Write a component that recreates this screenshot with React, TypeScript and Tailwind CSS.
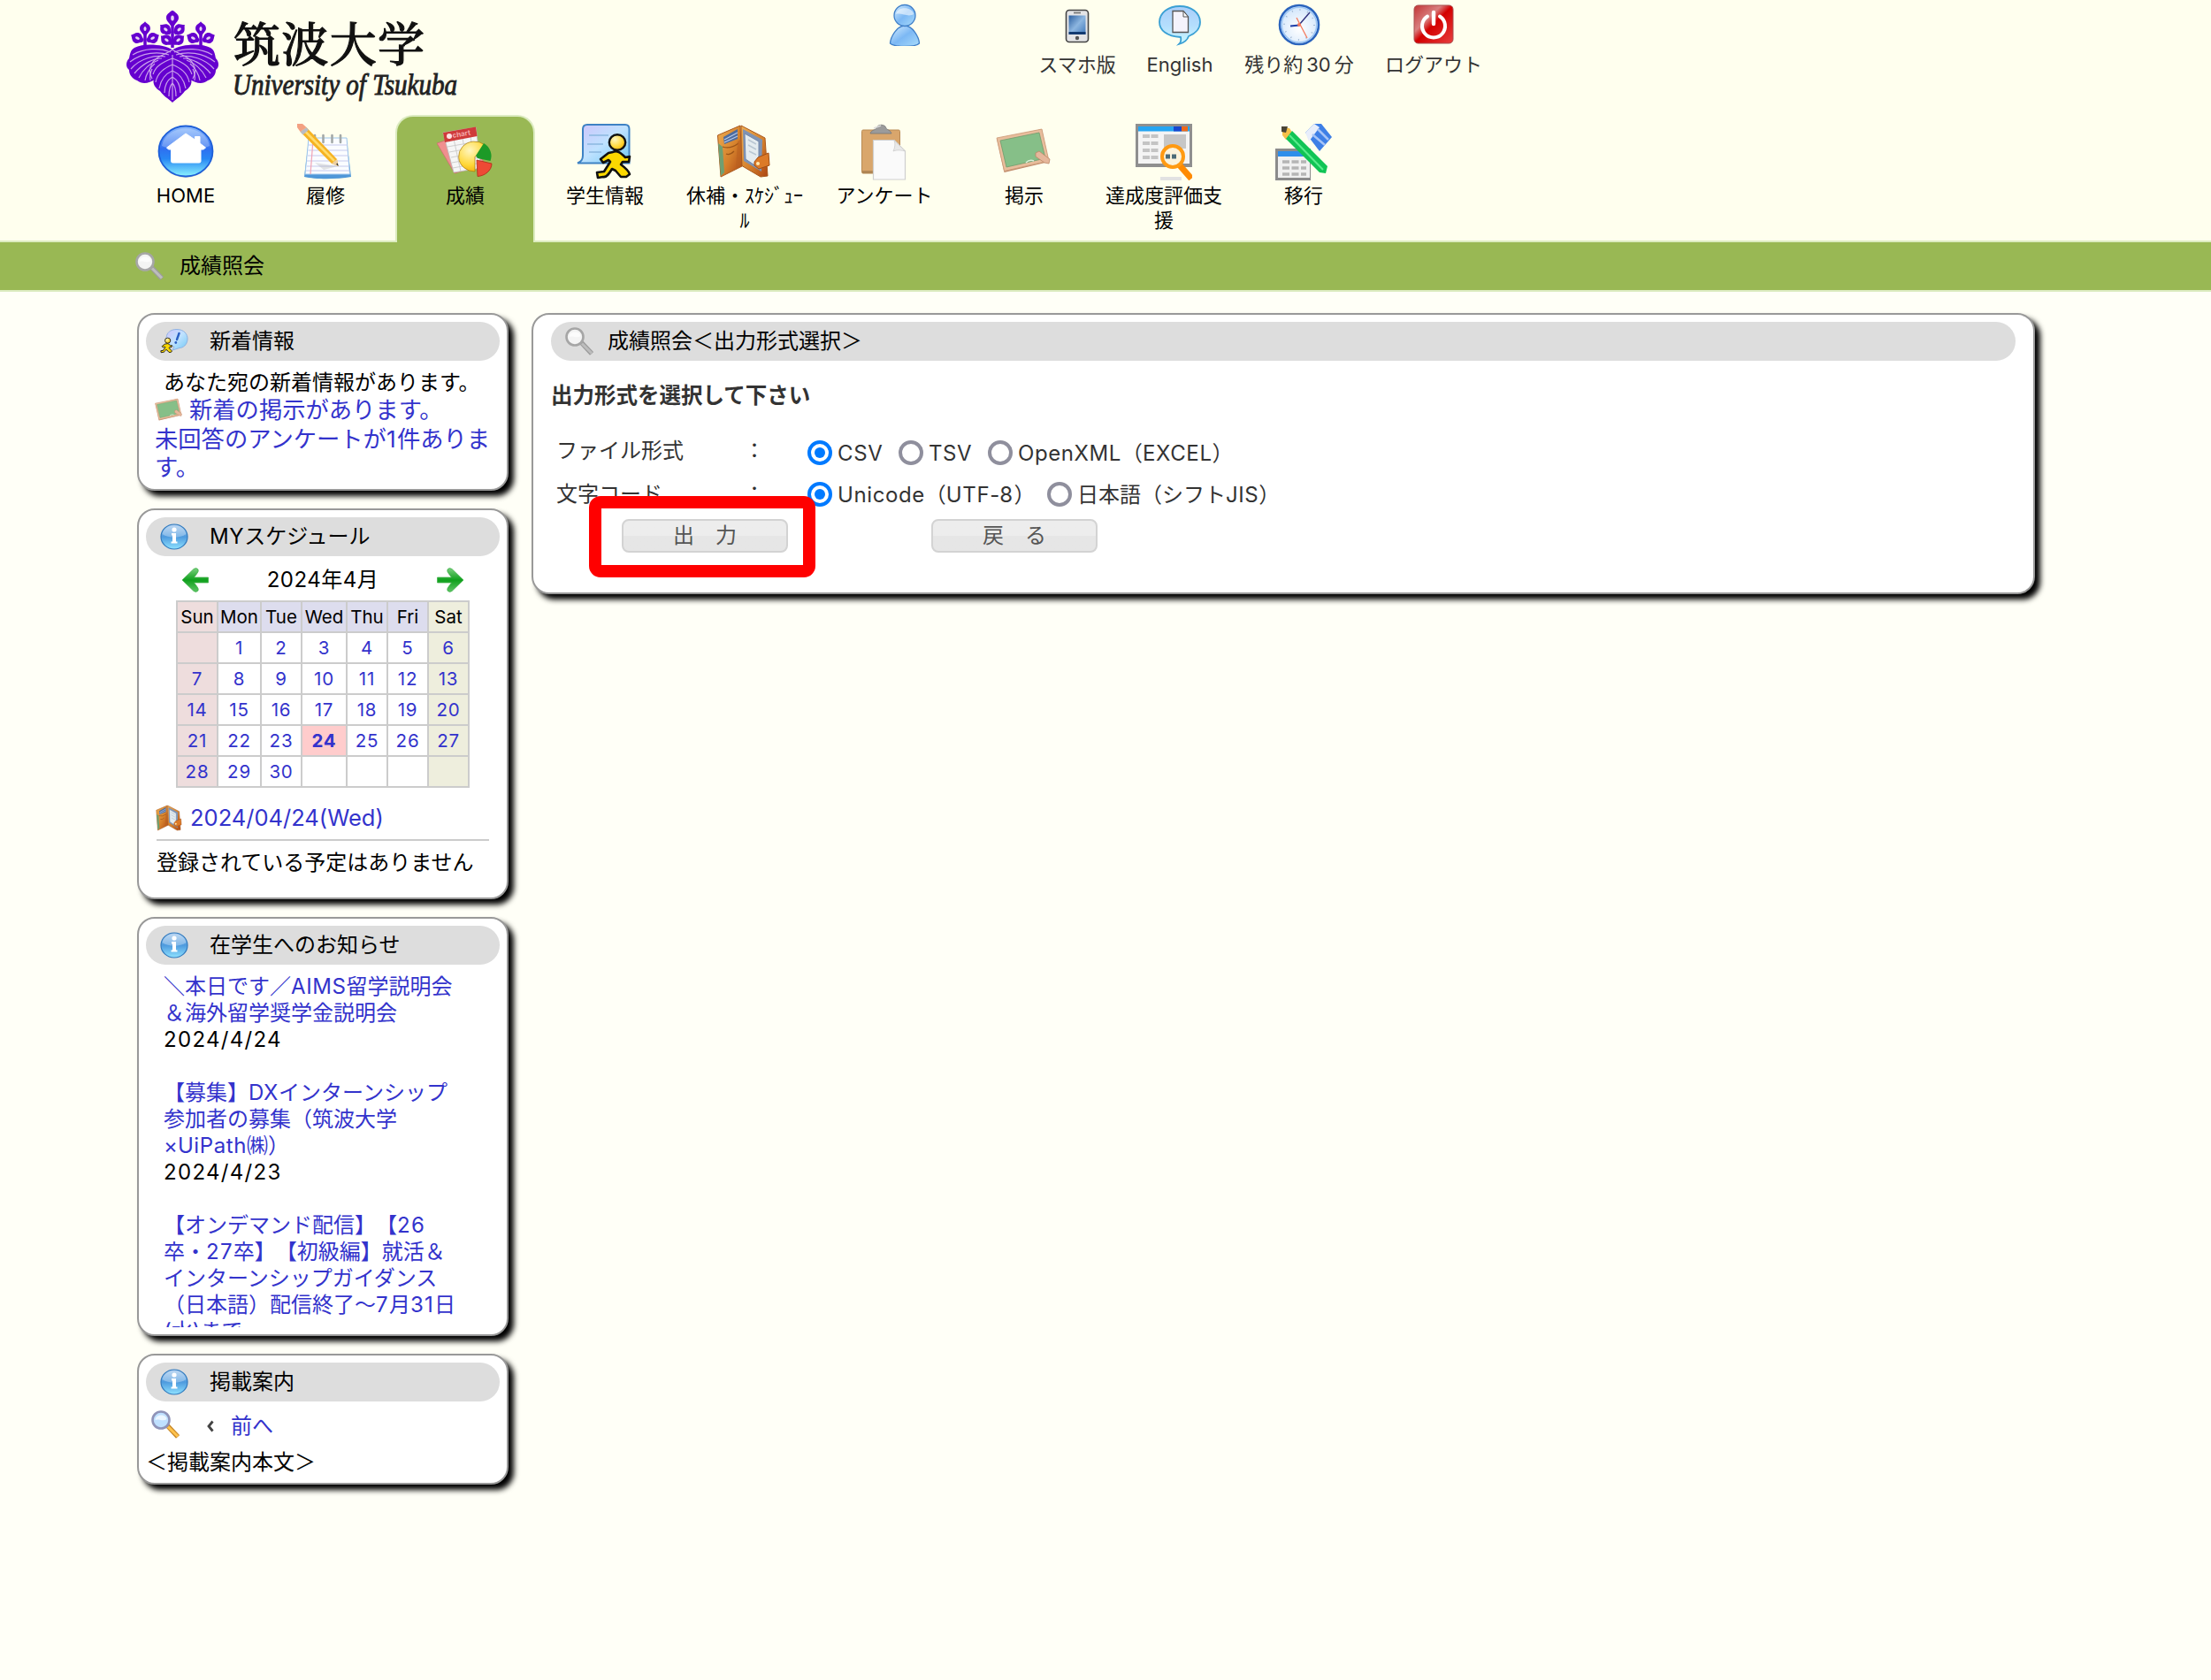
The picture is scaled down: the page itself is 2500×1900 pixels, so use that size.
import React from "react";

type IconProps = { className?: string };

const Emblem = () => {
  const petal = (x: number, y: number, r: number, s = 1) => (
    <g transform={`translate(${x} ${y}) rotate(${r}) scale(${s})`}>
      <path d="M0-9C2-6 7-5 7 0C7 4 4 5 2 9H-2C-4 5-7 4-7 0C-7-5-2-6 0-9Z" fill="#6500cf" />
      <ellipse cy="0.5" rx="1.8" ry="3" fill="#e6d2f2" />
    </g>
  );
  return (
    <svg viewBox="0 0 104 104" className="h-[104px] w-[104px]">
      {petal(52, 8, 0)}
      {petal(44, 21, -50, 0.85)}
      {petal(60, 21, 50, 0.85)}
      {petal(45, 33, -55, 0.85)}
      {petal(59, 33, 55, 0.85)}
      {petal(21, 20, 0, 0.85)}
      {petal(12, 31, -65, 0.85)}
      {petal(30, 31, 65, 0.85)}
      {petal(84, 20, 0, 0.85)}
      {petal(75, 31, -65, 0.85)}
      {petal(93, 31, 65, 0.85)}
      <path d="M52 14V42M21 26V40M84 26V40" stroke="#6500cf" strokeWidth="3.5" />
      <g fill="#6500cf">
        <path d="M52 44C42 38 20 36 9 42C4 45 4 50 3 54C-1 58-1 64 3 67C3 73 7 77 12 79C18 84 26 82 32 78L52 60Z" />
        <path d="M52 44C62 38 84 36 95 42C100 45 100 50 101 54C105 58 105 64 101 67C101 73 97 77 92 79C86 84 78 82 72 78L52 60Z" />
        <path d="M52 44C42 50 33 52 31 60C26 66 27 72 31 77C29 83 33 88 38 91C42 97 47 99 52 104C57 99 62 97 66 91C71 88 75 83 73 77C77 72 78 66 73 60C71 52 62 50 52 44Z" />
      </g>
      <g fill="none" stroke="#c9a0ea" strokeWidth="1.2">
        <path d="M50 47C38 42 20 42 7 50M48 50C36 46 18 47 4 58M44 52C32 50 15 54 5 66M40 54C30 54 18 60 9 71M36 56C28 59 19 66 14 76M32 60C27 64 22 72 21 79M29 66C27 70 26 74 27 79" />
        <path d="M54 47C66 42 84 42 97 50M56 50C68 46 86 47 100 58M60 52C72 50 89 54 99 66M64 54C74 54 86 60 95 71M68 56C76 59 85 66 90 76M72 60C77 64 82 72 83 79M75 66C77 70 78 74 77 79" />
        <path d="M52 50V101M52 54C42 58 33 62 30 72M52 54C62 58 71 62 74 72M52 61C43 65 35 70 33 81M52 61C61 65 69 70 71 81M52 68C45 71 39 77 37 88M52 68C59 71 65 77 67 88M52 75C47 78 43 83 43 93M52 75C57 78 61 83 61 93M52 82C49 85 48 89 48 97M52 82C55 85 56 89 56 97" />
        <path d="M52 44C44 50 32 52 29 60C25 66 26 72 29 77M52 44C60 50 72 52 75 60C79 66 78 72 75 77" />
      </g>
    </svg>
  );
};

const Logo = () => (
  <div className="flex h-[104px] w-[380px] gap-[14px]">
    <Emblem />
    <svg viewBox="261 12 262 110" className="h-[110px] w-[262px] overflow-visible">
      <text x="264" y="70" textLength="216" lengthAdjust="spacing" fontSize="53" fontWeight="500" fill="#111" stroke="#111" strokeWidth="1.1" fontFamily="'Noto Serif CJK JP','Noto Sans CJK JP',serif">
        筑波大学
      </text>
      <text x="263" y="107" textLength="254" lengthAdjust="spacingAndGlyphs" fontSize="33" fontStyle="italic" fill="#222" stroke="#222" strokeWidth="0.9" fontFamily="'Liberation Serif',serif">
        University of Tsukuba
      </text>
    </svg>
  </div>
);

const Defs = () => (
  <svg className="absolute h-0 w-0">
    <defs>
      <linearGradient id="blue" x1="0" y1="0" x2="0" y2="1">
        <stop offset="0" stopColor="#8fbdfc" />
        <stop offset="0.45" stopColor="#2f6ff0" />
        <stop offset="0.65" stopColor="#2787f4" />
        <stop offset="1" stopColor="#8cf4ff" />
      </linearGradient>
      <linearGradient id="person" x1="0" y1="0" x2="1" y2="1">
        <stop offset="0" stopColor="#d9efff" />
        <stop offset="0.5" stopColor="#7cb8f4" />
        <stop offset="1" stopColor="#a9dcfb" />
      </linearGradient>
      <linearGradient id="info" x1="0" y1="0" x2="0" y2="1">
        <stop offset="0" stopColor="#a6c9ee" />
        <stop offset="0.5" stopColor="#4d9ade" />
        <stop offset="1" stopColor="#8fe2ff" />
      </linearGradient>
      <linearGradient id="bubble" x1="0" y1="0" x2="0" y2="1">
        <stop offset="0" stopColor="#a9cdf9" />
        <stop offset="0.5" stopColor="#b4defd" />
        <stop offset="1" stopColor="#c9f8ff" />
      </linearGradient>
      <linearGradient id="page" x1="0" y1="0" x2="1" y2="1">
        <stop offset="0" stopColor="#cfc4fb" />
        <stop offset="0.5" stopColor="#bfe2ff" />
        <stop offset="1" stopColor="#6fc8f4" />
      </linearGradient>
      <linearGradient id="red" x1="0" y1="0" x2="1" y2="1">
        <stop offset="0" stopColor="#c23434" />
        <stop offset="0.35" stopColor="#d98080" />
        <stop offset="0.5" stopColor="#d30000" />
        <stop offset="1" stopColor="#e84040" />
      </linearGradient>
      <linearGradient id="screen" x1="0" y1="0" x2="1" y2="1">
        <stop offset="0" stopColor="#2c5fa0" />
        <stop offset="0.5" stopColor="#8db6e0" />
        <stop offset="1" stopColor="#3f78bb" />
      </linearGradient>
      <linearGradient id="leather" x1="0" y1="0" x2="1" y2="1">
        <stop offset="0" stopColor="#efae52" />
        <stop offset="0.55" stopColor="#d5812c" />
        <stop offset="1" stopColor="#ad4514" />
      </linearGradient>
      <linearGradient id="arrow" x1="0" y1="0" x2="0" y2="1">
        <stop offset="0" stopColor="#7bd07f" />
        <stop offset="0.5" stopColor="#0fa01c" />
        <stop offset="1" stopColor="#5fc566" />
      </linearGradient>
      <radialGradient id="yellow" cx="0.35" cy="0.3" r="0.8">
        <stop offset="0" stopColor="#fff6c0" />
        <stop offset="0.6" stopColor="#ffd83a" />
        <stop offset="1" stopColor="#f0a800" />
      </radialGradient>
      <radialGradient id="face" cx="0.5" cy="0.6" r="0.6">
        <stop offset="0" stopColor="#ffffff" />
        <stop offset="1" stopColor="#cfe4fb" />
      </radialGradient>
    </defs>
  </svg>
);

const PersonIcon = () => (
  <svg viewBox="0 0 48 48" className="h-12 w-12">
    <path d="M24 25C15 25 8 38 7.500 45C12 49.500 36 49.500 40.500 45C40 38 33 25 24 25Z" fill="url(#person)" stroke="#3f7fc8" strokeWidth="1.3" />
    <ellipse cx="24" cy="13.500" rx="12" ry="12" fill="url(#person)" stroke="#3f7fc8" strokeWidth="1.3" />
    <path d="M14 12C15 3 33 3 34 12C28 16 20 10 14 12Z" fill="#fff" opacity="0.55" />
  </svg>
);

const PhoneIcon = () => (
  <svg viewBox="0 0 48 48" className="h-12 w-12">
    <rect x="11.500" y="7.500" width="25" height="36" rx="3.500" fill="#e4e4e6" stroke="#444" strokeWidth="1.6" />
    <rect x="14.500" y="13.500" width="19" height="21.500" fill="url(#screen)" />
    <path d="M14.500 32H33.500V35H14.500Z" fill="#123a70" />
    <path d="M20 10.500H28" stroke="#777" strokeWidth="1.8" />
    <circle cx="24" cy="39" r="2.200" fill="#555" />
  </svg>
);

const BubbleIcon = () => (
  <svg viewBox="0 0 48 48" className="h-12 w-12">
    <path d="M24 3C11 3 1 10.500 1 21C1 30 9 37 25 38C26 42 25 44 23 46C30 44 33 40 34 37C42 34 47 28 47 21C47 10.500 37 3 24 3Z" fill="url(#bubble)" stroke="#3aa0d4" strokeWidth="1.8" />
    <path d="M16 8.500H28L33.500 15V32.500H16Z" fill="#f4f3fc" stroke="#555" strokeWidth="1.3" />
    <path d="M28 8.500V15H33.500Z" fill="#fff" stroke="#555" strokeWidth="1" />
  </svg>
);

const ClockIcon = () => (
  <svg viewBox="0 0 48 48" className="h-12 w-12">
    <ellipse cx="24" cy="24" rx="22" ry="22" fill="url(#face)" stroke="#2b64bd" strokeWidth="2.600" />
    <circle cx="24" cy="24" r="19.800" fill="none" stroke="#9cc6f4" strokeWidth="1.600" />
    <circle cx="24" cy="24" r="17" fill="none" stroke="#9db4d0" strokeWidth="1.800" strokeDasharray="1 7.900" />
    <path d="M24 24L36 10" stroke="#30307c" strokeWidth="1.400" />
    <path d="M24 24.500L14 25.500" stroke="#1f3fa8" strokeWidth="2" />
    <path d="M21 16L33 39" stroke="#f57a5c" strokeWidth="1.300" />
    <circle cx="24" cy="24" r="2" fill="#f57a5c" />
  </svg>
);

const PowerIcon = () => (
  <svg viewBox="0 0 48 48" className="h-12 w-12">
    <rect x="2" y="2" width="44" height="43" rx="4.500" fill="url(#red)" stroke="#a85050" strokeWidth="1" />
    <path d="M17 14.500A13 13 0 1 0 31 14.500" fill="none" stroke="#fff" strokeWidth="4" strokeLinecap="round" />
    <path d="M24 10V23" stroke="#fff" strokeWidth="4.400" strokeLinecap="round" />
  </svg>
);

const HomeIcon = () => (
  <svg viewBox="0 0 64 64" className="h-16 w-16">
    <ellipse cx="32" cy="33" rx="30" ry="28" fill="#8a8f98" opacity="0.45" />
    <ellipse cx="32" cy="31" rx="30.500" ry="28.500" fill="url(#blue)" stroke="#1e5fd8" strokeWidth="1.800" />
    <path d="M5 25C10 -1 54 -1 59 25C48 30 16 30 5 25Z" fill="#fff" opacity="0.25" />
    <path d="M32 11L42.500 18V14.500H48V22L54.500 27L52 29H49V42.500Q49 44 47 44H17.500Q15.500 44 15.500 42.500V29H12.500L10.500 27Z" fill="#fff" stroke="#fff" strokeLinejoin="round" />
  </svg>
);

const NotebookIcon = () => (
  <svg viewBox="0 0 64 64" className="h-16 w-16">
    <path d="M13 18H56L61 60C45 63 20 63 8 60Z" fill="#4f97d8" />
    <path d="M13 16H56L59.500 57H9Z" fill="#fafcff" stroke="#9cc5ea" strokeWidth="1" />
    <path d="M13 24H57M12.500 30H57.500M12 36H58M11 42H58.500M11 48H59M10 53H59" stroke="#c6c9ee" strokeWidth="1.200" />
    <path d="M18 18L15 57" stroke="#f2a4b4" strokeWidth="1.200" />
    <path d="M20 13V21M29.500 13V21M39.500 13V21M49 13V21" stroke="#a3a9a8" strokeWidth="2.600" strokeLinecap="round" />
    <path d="M20 44L46 48L30 52Z" fill="#999" opacity="0.25" />
    <path d="M3.500 9L10.500 4L45 40L46.500 48L39 45Z" fill="#f6b322" />
    <path d="M7 6.500L42 42" stroke="#ffdc6b" strokeWidth="2.500" />
    <path d="M39 45L45 40L46.500 48Z" fill="#ecd0a4" />
    <path d="M44 45.500L46.500 48L46 44.500Z" fill="#333" />
    <path d="M3.500 9L10.500 4L13 7L6.500 12.500Z" fill="#b9bcc4" />
    <path d="M0 0H6L10.500 4L3.500 9L0 4Z" fill="#f3a182" />
  </svg>
);

const ChartIcon = () => (
  <svg viewBox="0 0 64 64" className="h-16 w-16">
    <path d="M0 22L36 10L54 46L20 56Z" fill="#f08f8f" stroke="#cc6f6f" strokeWidth="0.800" />
    <path d="M7 10L44 4L50 50L19 55Z" fill="#f6f6f6" stroke="#bbb" strokeWidth="0.800" />
    <path d="M12 26L46 20M14 32L47 26M16 38L48 32M17 44L49 38M18 50L50 44M19 17L27 54M29 16L35 52M38 14L43 50" stroke="#c9c9c9" strokeWidth="0.900" />
    <path d="M7 10L44 3.500L45.500 14L9 21Z" fill="#cf3a3a" />
    <circle cx="14" cy="14" r="3" fill="#ffe2e2" />
    <text x="18" y="16" fontSize="8" fontWeight="700" fill="#f3a9a9" fontFamily="Inter,sans-serif" transform="rotate(-10 18 16)">chart</text>
    <path d="M43 37L43 54A18 17 0 1 1 60.500 35Z" fill="url(#yellow)" stroke="#a87a10" strokeWidth="0.700" />
    <path d="M44 36L53 22A18 17 0 0 1 60.500 42L46 39Z" fill="#1c9a27" />
    <path d="M45 41L62 45C62 53 54 59 46 59.500Z" fill="#ee4a35" stroke="#b02818" strokeWidth="0.800" />
  </svg>
);

const Runner = () => (
  <>
    <path
      d="M41 32C46 29 51 34 55 38L60 37L59 43L52 43L50 46C54 49 59 53 60 57L56 60L50 60L44 53L40 51C37 56 34 61 30 60L24 61L23 55L31 54L38 43L36 41L30 44L27 40L36 33Z"
      fill="#fcd800" stroke="#111" strokeWidth="2.600" strokeLinejoin="round"
    />
    <ellipse cx="46" cy="21" rx="9.200" ry="8.800" fill="url(#yellow)" stroke="#111" strokeWidth="2.400" />
  </>
);

const StudentIcon = () => (
  <svg viewBox="0 0 64 64" className="h-16 w-16">
    <path d="M7 6Q7 1 12 1H55Q59.500 1 59.500 6V44.500H1C5 43 7 41 7 36Z" fill="url(#page)" stroke="#3e82c4" strokeWidth="2" />
    <path d="M14 13H36M12 23H30M14 32H28" stroke="#8cb8e0" strokeWidth="1.300" />
    <Runner />
  </svg>
);

const PlannerIcon = ({ className = "h-16 w-16" }: IconProps) => (
  <svg viewBox="0 0 64 64" className={className}>
    <path d="M28 2L55 16L58 59L50 60L28 47Z" fill="url(#leather)" stroke="#a8581e" strokeWidth="1" />
    <path d="M30 6L52 18L51 54L31 42Z" fill="#7f93b4" />
    <path d="M32 11L48 20V50L33 40Z" fill="#e4ecf0" stroke="#6f87ab" strokeWidth="1" />
    <path d="M36 18L45 23M36 24L45 29M37 31L45 35" stroke="#b9c7d3" strokeWidth="1.500" />
    <path d="M1.500 13L27 2L29 48L5 60Z" fill="url(#leather)" stroke="#a8581e" strokeWidth="1" />
    <path d="M8 15L24 6V17L9 23Z" fill="#4d6c9f" />
    <path d="M9 18L24 10M9 21L24 14" stroke="#b9c9e6" strokeWidth="1.200" />
    <path d="M7 26Q16 29 25 22M11 34Q15 36 20 31" fill="none" stroke="#9c5518" strokeWidth="1.300" />
    <path d="M2 22L7 26L9 55L5 59Z" fill="#6f9f72" />
    <path d="M24 20L27 18L28 47L22 50Z" fill="#b9601f" opacity="0.6" />
    <path d="M47 38L59 33L60 47L48 51L43 47L43 43Z" fill="#dc7a28" stroke="#a24d14" strokeWidth="1" />
    <circle cx="47" cy="45" r="2" fill="#ffe7b0" />
  </svg>
);

const ClipboardIcon = () => (
  <svg viewBox="0 0 64 64" className="h-16 w-16">
    <rect x="6.500" y="7" width="43" height="49" rx="1.500" fill="#d9a66c" stroke="#b98a55" strokeWidth="1" />
    <path d="M7 53H20V56H7Z" fill="#9a7448" opacity="0.6" />
    <path d="M16 11C17 7 22 7 23 5C24 0 33 0 34 5C35 7 39 7 40 11Z" fill="#9b9b9b" stroke="#777" strokeWidth="0.800" />
    <path d="M20 5L28 2" stroke="#ddd" strokeWidth="1.500" />
    <path d="M19.500 18.500H43L55.500 31V63H19.500Z" fill="#fafafa" stroke="#cfcfcf" strokeWidth="1.200" />
    <path d="M43 18.500C45 24 43 29 42 31C47 29 52 30 55.500 31Z" fill="#e9e9e9" stroke="#ccc" strokeWidth="0.800" />
  </svg>
);

const BoardIcon = ({ className = "h-16 w-16" }: IconProps) => (
  <svg viewBox="0 0 64 64" className={className}>
    <path d="M1 17L52 6L60 43L9.500 55Z" fill="#c08b6c" />
    <path d="M1 16L52 6L60 42L9.500 53.500Z" fill="#e8bd9c" stroke="#cc9876" strokeWidth="0.800" />
    <path d="M5 19L49 10L56 39L12 49Z" fill="#86bf88" stroke="#6f9c6c" strokeWidth="0.800" />
    <path d="M34 44Q38 40 43 42" fill="none" stroke="#dcefdc" strokeWidth="1.500" />
    <path d="M45 33L49 31L61 40L60 45L55 44L45 37Z" fill="#e6b79b" stroke="#bd8767" strokeWidth="0.800" />
  </svg>
);

const EvaluateIcon = () => (
  <svg viewBox="0 0 64 64" className="h-16 w-16">
    <path d="M0 0H64V49H0Z" fill="#8f8f8f" />
    <path d="M3 8H61V45H3Z" fill="#f4f4f4" />
    <path d="M3 3H61V8.500H3Z" fill="#25a5f2" />
    <path d="M43 3H52V8.500H43Z" fill="#1747cf" />
    <path d="M52 3H59V8.500H52Z" fill="#ee6a1a" />
    <path d="M8 14H27M8 22H27M8 30H27M8 38H27" stroke="#c4c4c4" strokeWidth="4" strokeDasharray="8 1.500" />
    <path d="M32 12H57V28H32Z" fill="#c6c6c6" />
    <path d="M28 62H52" stroke="#e2e2e2" strokeWidth="4" />
    <path d="M49 46L63 62" stroke="#ff8a00" strokeWidth="7" />
    <circle cx="42" cy="37" r="12" fill="#fbf3dc" stroke="#ff9a12" strokeWidth="4" />
    <path d="M34 37H39M41 37H46" stroke="#4a6a78" strokeWidth="5" />
  </svg>
);

const MigrateIcon = () => (
  <svg viewBox="0 0 64 64" className="h-16 w-16">
    <path d="M0 28H40V64H0Z" fill="#8b8b8b" />
    <path d="M3 37H39V61H3Z" fill="#f0f0f0" />
    <path d="M3 31H39V37H3Z" fill="#2f8eea" />
    <path d="M8 43H35M8 50H35M8 57H35" stroke="#b5b5b5" strokeWidth="3.500" strokeDasharray="8 2.500" />
    <path d="M34 10L44 0H52L64 15L50 31Z" fill="#3e7fe6" />
    <path d="M34 10L44 0L50 4L38 20Z" fill="#e8eefb" />
    <path d="M42 12L56 24M48 6L60 18" stroke="#a7c4f6" strokeWidth="2.500" />
    <path d="M8 4L16 5L20 11L12 18L8 13Z" fill="#f5c04a" />
    <path d="M7 3H14L12 10L7 9Z" fill="#4a4436" />
    <path d="M19 8L59 48L57 56L50 55L12 17Z" fill="#11c455" />
    <path d="M16 13L54 52" stroke="#5aec8c" strokeWidth="2" />
  </svg>
);

const Magnifier = ({ tone }: { tone: "gray" | "blue" }) => (
  <svg viewBox="0 0 32 32" className="h-8 w-8">
    <path d="M18 17L30 30" stroke={tone === "gray" ? "#9c9c9c" : "#c98a2a"} strokeWidth="5.500" />
    <path d="M19 18.500L30 29.500" stroke={tone === "gray" ? "#bdbdbd" : "#ffc34d"} strokeWidth="3" />
    <circle cx="11" cy="11" r="9.500" fill={tone === "gray" ? "#f4f4f4" : "#bfe0ff"} stroke={tone === "gray" ? "#a6a6a6" : "#8f93b8"} strokeWidth="2.600" />
    <path d="M4.500 11C5 4 17 4 17.500 10C14 13 8 9 4.500 11Z" fill="#fff" opacity="0.7" />
  </svg>
);

const InfoIcon = () => (
  <svg viewBox="0 0 32 32" className="h-8 w-8">
    <ellipse cx="16" cy="16" rx="15" ry="14" fill="url(#info)" stroke="#3079bd" strokeWidth="1.200" />
    <path d="M2.500 13C5 0 27 0 29.500 13C22 18 10 18 2.500 13Z" fill="#fff" opacity="0.3" />
    <circle cx="16" cy="8" r="2.600" fill="#fff" />
    <path d="M13 12H18V21.500H19.500V23.500H12.500V21.500H14V14.500H13Z" fill="#fff" />
  </svg>
);

const NewsIcon = () => (
  <svg viewBox="0 0 32 32" className="h-8 w-8">
    <path d="M19 2.500C27 2.500 31.500 8 31 14C30.500 20 26 23.500 22 23.500L14 26L16 22C9 20 6 15 7.500 9.500C9 5 13 2.500 19 2.500Z" fill="url(#page)" stroke="#8fb3e3" strokeWidth="1" />
    <path d="M21.500 7L19 14" stroke="#2a5fc4" strokeWidth="2.400" strokeLinecap="round" />
    <circle cx="17.800" cy="17.500" r="1.400" fill="#2a5fc4" />
    <g transform="translate(-7 8) scale(0.34)">
      <Runner />
    </g>
  </svg>
);

const GreenArrow = ({ className = "" }: IconProps) => (
  <svg viewBox="0 0 32 28" className={`h-7 w-8 ${className}`}>
    <path d="M1 14L14 1.500Q17 -0.500 19 2Q20 4 17.500 7L14.500 11H30.500V17H14.500L17.500 21Q20 24 19 26Q17 28.500 14 26.500Z" fill="url(#arrow)" stroke="#3aae44" strokeWidth="0.700" />
  </svg>
);

/* Latin words and numbers are set a little wider than the kana around them. */
const Mixed = ({ text }: { text: string }) => (
  <>
    {text.split(/([0-9/]+|[A-Za-z]+)/).map((part, i) => {
      if (/^[0-9/]+$/.test(part)) return <span key={i} className="tracking-[1.3px]">{part}</span>;
      if (/^[A-Za-z]+$/.test(part)) return <span key={i} className="tracking-[0.6px]">{part}</span>;
      return part;
    })}
  </>
);

const utilities = [
  { icon: <PersonIcon />, label: "", box: "ml-[470px] w-[60px]" },
  { icon: <PhoneIcon />, label: "スマホ版", box: "ml-[115px] w-[100px]" },
  { icon: <BubbleIcon />, label: "English", box: "ml-4 w-[100px]" },
  { icon: <ClockIcon />, label: "残り約\u200930\u2009分", box: "ml-[15px] w-[140px]" },
  { icon: <PowerIcon />, label: "ログアウト", box: "ml-[22px] w-[120px]" },
];

const tabs = [
  { icon: <HomeIcon />, lines: ["HOME"] },
  { icon: <NotebookIcon />, lines: ["履修"] },
  { icon: <ChartIcon />, lines: ["成績"], active: true },
  { icon: <StudentIcon />, lines: ["学生情報"] },
  { icon: <PlannerIcon />, lines: ["休補・ｽｹｼﾞｭｰ", "ﾙ"] },
  { icon: <ClipboardIcon />, lines: ["アンケート"] },
  { icon: <BoardIcon />, lines: ["掲示"] },
  { icon: <EvaluateIcon />, lines: ["達成度評価支", "援"] },
  { icon: <MigrateIcon />, lines: ["移行"] },
];

const Panel = ({ icon, title, className, pill = "", children }: { icon: React.ReactNode; title: string; className: string; pill?: string; children: React.ReactNode }) => (
  <section className={`rounded-[20px] border-2 border-[#999] bg-white px-2 pt-2 shadow-[6px_6px_6px_#000] ${className}`}>
    <h2 className={`flex h-11 items-center rounded-full bg-[#ddd] pl-4 text-2xl text-black ${pill}`}>
      {icon}
      <span className="ml-6 pb-px leading-[42px]"><Mixed text={title} /></span>
    </h2>
    {children}
  </section>
);

const weekdays = ["Sun", "Mon", "Tue", "Wed", "Thu", "Fri", "Sat"];
const weeks = [0, 1, 2, 3, 4].map((w) => weekdays.map((_, d) => w * 7 + d)).map((row) => row.map((n) => (n >= 1 && n <= 30 ? n : null)));

const cellColor = (col: number, header: boolean, today: boolean) => {
  if (today) return "bg-[#fcc] font-bold";
  if (col === 0) return "bg-[#edd]";
  if (col === 6) return "bg-[#eed]";
  return header ? "bg-[#dde]" : "bg-white";
};

const Calendar = () => (
  <div className="ml-[34px] grid w-[332px] grid-cols-[44px_47px_44px_49px_44px_44px_44px] gap-[2px] border-2 border-[#ccc] bg-[#ccc] text-center text-[20.5px] leading-[33px]">
    {weekdays.map((d, i) => (
      <div key={d} className={`h-[33px] text-black ${cellColor(i, true, false)}`}>
        <span className="-mx-2">{d}</span>
      </div>
    ))}
    {weeks.flat().map((n, i) => (
      <div key={i} className={`h-[33px] tracking-[0.8px] text-[#33c] ${cellColor(i % 7, false, n === 24)}`}>
        {n}
      </div>
    ))}
  </div>
);

const Radio = ({ checked = false }: { checked?: boolean }) => (
  <span className={`flex h-7 w-7 shrink-0 items-center justify-center rounded-full border-4 bg-white ${checked ? "border-[#007aff]" : "border-[#8f8f9d]"}`}>
    {checked && <span className="h-3 w-3 rounded-full bg-[#007aff]" />}
  </span>
);

const Option = ({ label, checked, className }: { label: string; checked?: boolean; className: string }) => (
  <label className={`flex items-center ${className}`}>
    <Radio checked={checked} />
    <span className="ml-[6px] whitespace-nowrap pt-px"><Mixed text={label} /></span>
  </label>
);

const Button = ({ label, className }: { label: string; className: string }) => (
  <button className={`h-[38px] w-[188px] rounded-lg border-2 border-[#d3d3d3] bg-linear-to-b from-[#ededed] from-50% to-[#e6e6e6] to-50% text-2xl leading-[34px] text-[#555] ${className}`}>{label}</button>
);

const news = [
  { lines: ["＼本日です／AIMS留学説明会", "＆海外留学奨学金説明会"], date: "2024/4/24" },
  { lines: ["【募集】DXインターンシップ", "参加者の募集（筑波大学", "×UiPath㈱）"], date: "2024/4/23" },
  { lines: ["【オンデマンド配信】【26", "卒・27卒】【初級編】就活＆", "インターンシップガイダンス", "（日本語）配信終了～7月31日", "(水)まで"], date: "2024/4/22" },
];

export default function App() {
  return (
    <div lang="ja" className="h-[1900px] w-[2500px] overflow-hidden bg-[#fffff7] font-['Inter','Noto_Sans_CJK_JP',sans-serif] text-black [text-spacing-trim:space-all]">
      <Defs />
      <header className="h-[272px] bg-[#ffffee]">
        <div className="flex h-[130px] pl-[143px]">
          <div className="pt-3">
            <Logo />
          </div>
          <div className="flex">
            {utilities.map((u, i) => (
              <div key={i} className={`flex flex-col items-center pt-1 ${u.box}`}>
                {u.icon}
                <span className="mt-[6px] whitespace-pre text-[22px] leading-[30px] text-[#333]">{u.label}</span>
              </div>
            ))}
          </div>
        </div>
        <nav className="ml-[132px] flex h-[144px] gap-[2px]">
          {tabs.map((t) => (
            <div
              key={t.lines[0]}
              className={`-mx-px flex w-[158px] flex-col items-center pt-[10px] text-[22px] leading-[28px] ${t.active ? "relative rounded-t-[20px] border-2 border-b-0 border-[#dcebc0] bg-[#99b854] !pt-2" : ""}`}
            >
              {t.icon}
              <div className="mt-[3px] text-center">
                {t.lines.map((l) => (
                  <div key={l} className="whitespace-nowrap">{l}</div>
                ))}
              </div>
            </div>
          ))}
        </nav>
      </header>
      <div className="flex h-[58px] items-center border-y-2 border-[#dcebc0] bg-[#99b854] pl-[153px] text-2xl">
        <Magnifier tone="gray" />
        <span className="ml-[18px] leading-[50px]">成績照会</span>
      </div>

      <div className="flex items-start gap-[26px] pl-[155px] pt-6">
        <aside className="flex w-[420px] flex-col gap-5">
          <Panel icon={<NewsIcon />} title="新着情報" className="h-[201px]">
            <div className="pl-[10px] pt-[10px] text-[26.3px] leading-[32.500px]">
              <p className="pl-[10px] text-2xl leading-[30px]">あなた宛の新着情報があります。</p>
              <p className="flex items-center text-[#33c]">
                <BoardIcon className="mr-[7px] h-8 w-8" />
                新着の掲示があります。
              </p>
              <p className="whitespace-nowrap text-[#33c]">
                <Mixed text="未回答のアンケートが1件ありま" />
                <br />
                す。
              </p>
            </div>
          </Panel>

          <Panel icon={<InfoIcon />} title="MYスケジュール" className="h-[442px]">
            <div className="flex h-[50px] items-center justify-between px-10 pt-1 text-2xl">
              <GreenArrow />
              <span className="tracking-[0.5px]">2024年4月</span>
              <GreenArrow className="-scale-x-100" />
            </div>
            <Calendar />
            <div className="ml-3 mr-3 mt-[17px] flex h-[43px] items-center border-b-2 border-[#ccc] pb-[7px] text-[25.5px] text-[#33c]">
              <PlannerIcon className="-ml-px mr-2 h-[31px] w-[31px]" />
              <span>2024/04/24(Wed)</span>
            </div>
            <p className="ml-3 mt-2 text-2xl leading-[34px]">登録されている予定はありません</p>
          </Panel>

          <Panel icon={<InfoIcon />} title="在学生へのお知らせ" className="h-[474px]">
            <div className="ml-5 mt-[10px] h-[400px] overflow-hidden whitespace-nowrap text-2xl leading-[30px]">
              {news.map((n) => (
                <div key={n.date} className="mb-[30px]">
                  {n.lines.map((l) => (
                    <div key={l} className="text-[#33c]"><Mixed text={l} /></div>
                  ))}
                  <div><Mixed text={n.date} /></div>
                </div>
              ))}
            </div>
          </Panel>

          <Panel icon={<InfoIcon />} title="掲載案内" className="h-[148px]">
            <div className="ml-[6px] mt-[10px] flex h-[38px] text-2xl">
              <Magnifier tone="blue" />
              <svg viewBox="0 0 8 14" className="ml-[31px] mt-[11px] h-[14px] w-2">
                <path d="M6.500 1.500L2 7L6.500 12.500" fill="none" stroke="#444" strokeWidth="2.800" />
              </svg>
              <span className="ml-[19px] mt-[3px] leading-[30px] text-[#33c]">前へ</span>
            </div>
            <p className="mt-1 text-2xl leading-[34px]">＜掲載案内本文＞</p>
          </Panel>
        </aside>

        <Panel icon={<Magnifier tone="gray" />} title="成績照会＜出力形式選択＞" className="h-[318px] w-[1700px] !px-5" pill="[&>span]:!ml-4">
          <div className="relative text-2xl text-[#333]">
            <p className="pt-[22px] text-[24.500px] font-bold leading-[34px]">出力形式を選択して下さい</p>
            <div className="mt-[31px] flex h-[34px] items-center">
              <span className="ml-[6px] w-[212px] pb-1">ファイル形式</span>
              <span className="w-[72px] pb-1">：</span>
              <Option label="CSV" checked className="w-[103px]" />
              <Option label="TSV" className="w-[101px]" />
              <Option label="OpenXML（EXCEL）" className="" />
            </div>
            <div className="mt-[13px] flex h-[34px] items-center">
              <span className="ml-[6px] w-[212px]">文字コード</span>
              <span className="w-[72px]">：</span>
              <Option label="Unicode（UTF-8）" checked className="w-[271px]" />
              <Option label="日本語（シフトJIS）" className="" />
            </div>
            <div className="mt-[11px] flex">
              <Button label="出　力" className="ml-20" />
              <Button label="戻　る" className="ml-[162px]" />
            </div>
            <div className="absolute left-[43px] top-[153px] h-[92px] w-[256px] rounded-[13px] border-[14px] border-[#f00]" />
          </div>
        </Panel>
      </div>
    </div>
  );
}
